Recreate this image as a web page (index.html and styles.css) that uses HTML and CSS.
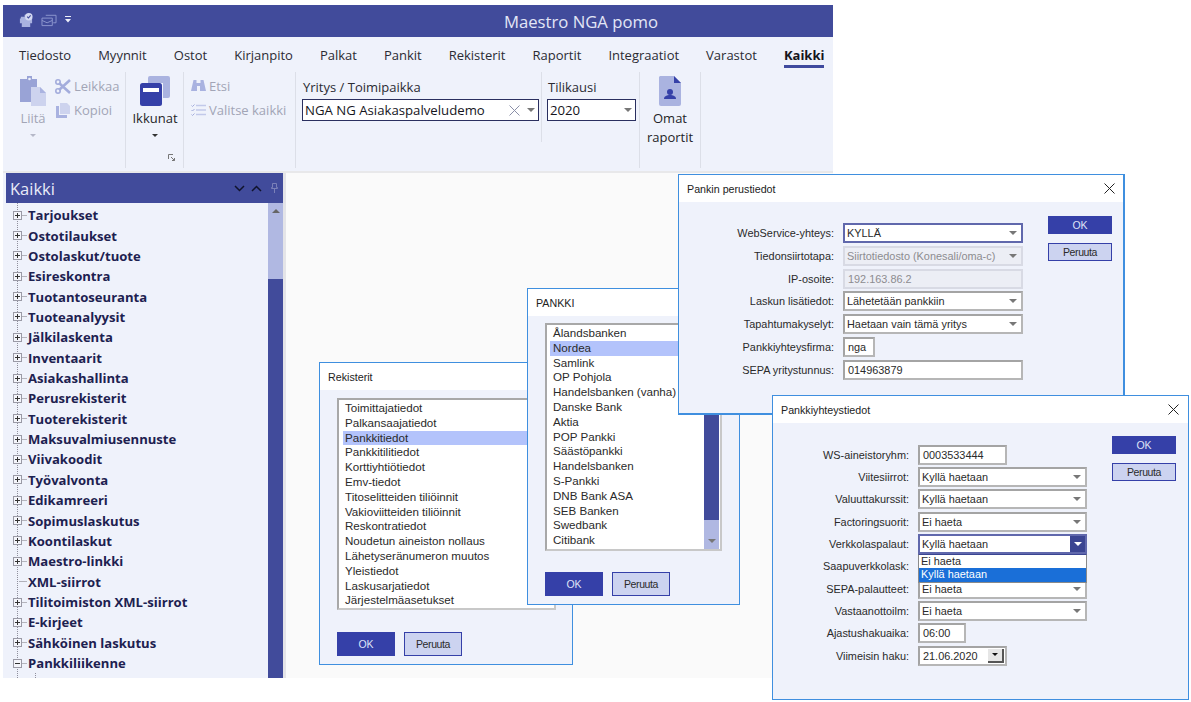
FILE: index.html
```html
<!DOCTYPE html>
<html lang="fi">
<head>
<meta charset="UTF-8" />
<title>Maestro NGA pomo</title>
<link rel="stylesheet" href="styles.css">
</head>
<body>
<div class="app">
  <div class="titlebar">
    <svg class="qa-icon" width="16" height="15" viewBox="0 0 17 16"><path fill="#aab3e0" d="M3 5h4V3h5v4h3v5h-2v4H4v-4H2V7h1z"/><circle cx="11.500" cy="5" r="4" fill="#d5daf2"/><path d="M9.700 5l1.400 1.400 2.300-2.800" fill="none" stroke="#414b9b" stroke-width="1.200"/></svg>
    <svg class="qa-icon" width="16" height="15" viewBox="0 0 16 16"><path fill="none" stroke="#8f99d0" d="M4.500 3.500h11v8h-3M.5 6.500h11v8H.500zM.5 9l5.500 2.500L11.500 9"/></svg>
    <svg class="qa-icon qa-more" width="6" height="7" viewBox="0 0 6 7"><path fill="#eef0fa" d="M0 0h6v1H0zM0 3h6L3 6.500z"/></svg>
    <div class="app-title">Maestro NGA pomo</div>
  </div>

  <div class="ribbon">
    <div class="tabs">
      <span>Tiedosto</span><span>Myynnit</span><span>Ostot</span><span>Kirjanpito</span><span>Palkat</span><span>Pankit</span><span>Rekisterit</span><span>Raportit</span><span>Integraatiot</span><span>Varastot</span><span class="tab-active">Kaikki</span>
    </div>
    <div class="groups">
      <div class="group group-clip">
        <div class="big-btn muted">
          <svg width="26" height="30" viewBox="0 0 26 30"><path fill="#99a3d6" d="M0 3h7V0h5v3h5v8h-6v15H0z"/><circle cx="9.500" cy="3" r="1.300" fill="#eff2fb"/><path fill="#cdd3ee" d="M11 11h9l6 6v13H11z"/><path fill="#aab3e0" d="M20 11l6 6h-6z"/></svg>
          <div class="big-label">Liitä</div>
          <i class="caret caret-muted"></i>
        </div>
        <div class="small-col">
          <div class="small-btn muted">
            <svg width="16" height="15" viewBox="0 0 16 15"><path d="M4 11L15 1M4 4l11 10" stroke="#a3acdc" stroke-width="2.600" fill="none"/><circle cx="3" cy="3" r="2.200" fill="none" stroke="#a3acdc" stroke-width="1.600"/><circle cx="3" cy="12" r="2.200" fill="none" stroke="#a3acdc" stroke-width="1.600"/></svg>
            Leikkaa
          </div>
          <div class="small-btn muted">
            <svg width="16" height="15" viewBox="0 0 16 15"><path fill="#a9b2e0" d="M1 3h3v9h8v3H1z"/><path fill="#cdd3ee" d="M5 0h7l3 3v8H5z"/></svg>
            Kopioi
          </div>
        </div>
      </div>

      <div class="group group-win">
        <div class="big-btn">
          <svg width="30" height="30" viewBox="0 0 30 30"><path fill="#aab3e0" d="M8 2a2 2 0 0 1 2-2h18a2 2 0 0 1 2 2v18a2 2 0 0 1-2 2h-5V7H8z"/><rect x="0" y="7" width="22" height="23" rx="2.500" fill="#3540a8"/><rect x="3" y="12" width="16" height="4" fill="#fff"/></svg>
          <div class="big-label">Ikkunat</div>
          <i class="caret"></i>
        </div>
        <svg class="launcher" width="7" height="7" viewBox="0 0 7 7"><path d="M.5 5V.5H5M3 3l3.500 3.500M6.500 4v2.500H4" fill="none" stroke="#777"/></svg>
      </div>

      <div class="group group-find">
        <div class="small-btn muted">
          <svg width="15" height="12" viewBox="0 0 15 12"><path fill="#a9b2e0" d="M2.500 0h3v3h4V0h3L15 11H9V6H6v5H0z"/></svg>
          Etsi
        </div>
        <div class="small-btn muted">
          <svg width="15" height="12" viewBox="0 0 15 12"><path d="M5 1.500h10M5 6h10M5 10.500h10" stroke="#c2c9ea" stroke-width="1.400"/><path d="M.5 1.500l1 1L3.500.5M.5 6l1 1 2-2M.5 10.500l1 1 2-2" stroke="#a3acdc" fill="none"/></svg>
          Valitse kaikki
        </div>
      </div>

      <div class="group group-company">
        <label class="combo-label">Yritys / Toimipaikka</label>
        <div class="combo">
          <span class="combo-text">NGA NG Asiakaspalveludemo</span>
          <svg width="11" height="11" viewBox="0 0 11 11"><path d="M.5.500l10 10M10.500.500l-10 10" stroke="#8a8fa8" fill="none"/></svg>
          <i class="arrow"></i>
        </div>
      </div>

      <div class="group group-year">
        <label class="combo-label">Tilikausi</label>
        <div class="combo">
          <span class="combo-text">2020</span>
          <i class="arrow"></i>
        </div>
      </div>

      <div class="group group-own">
        <div class="big-btn">
          <svg width="22" height="30" viewBox="0 0 22 30"><path fill="#aab3e0" d="M1 0h14l7 7v21a2 2 0 0 1-2 2H2a2 2 0 0 1-2-2V1z"/><path fill="#3540a8" d="M15 0l7 7h-7z"/><circle cx="11" cy="16" r="3" fill="#3540a8"/><path fill="#3540a8" d="M5 23c0-3 3-4 6-4s6 1 6 4z"/></svg>
          <div class="big-label">Omat<br>raportit</div>
        </div>
      </div>
    </div>
  </div>

  <div class="workspace">
    <div class="sidebar">
      <div class="side-head">
        <span class="side-title">Kaikki</span>
        <svg width="11" height="7" viewBox="0 0 11 7"><path d="M1 1l4.500 4.500L10 1" fill="none" stroke="#10132c" stroke-width="1.500"/></svg>
        <svg width="11" height="7" viewBox="0 0 11 7"><path d="M1 6l4.500-4.500L10 6" fill="none" stroke="#10132c" stroke-width="1.500"/></svg>
        <svg class="pin" width="7" height="10" viewBox="0 0 7 10"><path d="M1.500.500h4v4h1v1h-6v-1h1zM3.500 5.500V10" fill="none" stroke="#7a80b8"/></svg>
      </div>
      <div class="side-body">
        <div class="tree">
          <div class="node"><i class="exp"></i>Tarjoukset</div>
          <div class="node"><i class="exp"></i>Ostotilaukset</div>
          <div class="node"><i class="exp"></i>Ostolaskut/tuote</div>
          <div class="node"><i class="exp"></i>Esireskontra</div>
          <div class="node"><i class="exp"></i>Tuotantoseuranta</div>
          <div class="node"><i class="exp"></i>Tuoteanalyysit</div>
          <div class="node"><i class="exp"></i>Jälkilaskenta</div>
          <div class="node"><i class="exp"></i>Inventaarit</div>
          <div class="node"><i class="exp"></i>Asiakashallinta</div>
          <div class="node"><i class="exp"></i>Perusrekisterit</div>
          <div class="node"><i class="exp"></i>Tuoterekisterit</div>
          <div class="node"><i class="exp"></i>Maksuvalmiusennuste</div>
          <div class="node"><i class="exp"></i>Viivakoodit</div>
          <div class="node"><i class="exp"></i>Työvalvonta</div>
          <div class="node"><i class="exp"></i>Edikamreeri</div>
          <div class="node"><i class="exp"></i>Sopimuslaskutus</div>
          <div class="node"><i class="exp"></i>Koontilaskut</div>
          <div class="node"><i class="exp"></i>Maestro-linkki</div>
          <div class="node"><i class="leaf"></i>XML-siirrot</div>
          <div class="node"><i class="exp"></i>Tilitoimiston XML-siirrot</div>
          <div class="node"><i class="exp"></i>E-kirjeet</div>
          <div class="node"><i class="exp"></i>Sähköinen laskutus</div>
          <div class="node"><i class="exp exp-open"></i>Pankkiliikenne</div>
          <div class="subline"></div>
        </div>
        <div class="side-scroll">
          <div class="scroll-track"><i class="arrow-up"></i></div>
          <div class="scroll-thumb"></div>
        </div>
      </div>
    </div>
    <div class="main"></div>
  </div>
</div>

<div class="dialog dlg-rekisterit">
  <div class="dlg-title">Rekisterit</div>
  <div class="dlg-body">
    <div class="listbox list-reg">
      <div class="item">Toimittajatiedot</div>
      <div class="item">Palkansaajatiedot</div>
      <div class="item selected">Pankkitiedot</div>
      <div class="item">Pankkitilitiedot</div>
      <div class="item">Korttiyhtiötiedot</div>
      <div class="item">Emv-tiedot</div>
      <div class="item">Titoselitteiden tiliöinnit</div>
      <div class="item">Vakioviitteiden tiliöinnit</div>
      <div class="item">Reskontratiedot</div>
      <div class="item">Noudetun aineiston nollaus</div>
      <div class="item">Lähetyseränumeron muutos</div>
      <div class="item">Yleistiedot</div>
      <div class="item">Laskusarjatiedot</div>
      <div class="item">Järjestelmäasetukset</div>
    </div>
    <div class="btn-row">
      <div class="btn btn-ok">OK</div>
      <div class="btn btn-cancel">Peruuta</div>
    </div>
  </div>
</div>

<div class="dialog dlg-pankki">
  <div class="dlg-title">PANKKI</div>
  <div class="dlg-body">
    <div class="listbox list-bank">
      <div class="list-items">
        <div class="item">Ålandsbanken</div>
        <div class="item selected">Nordea</div>
        <div class="item">Samlink</div>
        <div class="item">OP Pohjola</div>
        <div class="item">Handelsbanken (vanha)</div>
        <div class="item">Danske Bank</div>
        <div class="item">Aktia</div>
        <div class="item">POP Pankki</div>
        <div class="item">Säästöpankki</div>
        <div class="item">Handelsbanken</div>
        <div class="item">S-Pankki</div>
        <div class="item">DNB Bank ASA</div>
        <div class="item">SEB Banken</div>
        <div class="item">Swedbank</div>
        <div class="item">Citibank</div>
      </div>
      <div class="list-scroll">
        <div class="scroll-thumb"></div>
        <div class="scroll-track"><i class="arrow"></i></div>
      </div>
    </div>
    <div class="btn-row">
      <div class="btn btn-ok">OK</div>
      <div class="btn btn-cancel">Peruuta</div>
    </div>
  </div>
</div>

<div class="dialog dlg-perus">
  <div class="dlg-title">Pankin perustiedot
    <svg class="dlg-close" width="11" height="11" viewBox="0 0 11 11"><path d="M.5.500l10 10M10.500.500l-10 10" stroke="#222" fill="none"/></svg>
  </div>
  <div class="dlg-body form-body">
    <div class="form">
      <label>WebService-yhteys:</label>
      <div class="field select focus">KYLLÄ<i class="arrow"></i></div>
      <label>Tiedonsiirtotapa:</label>
      <div class="field select disabled">Siirtotiedosto (Konesali/oma-c)<i class="arrow"></i></div>
      <label>IP-osoite:</label>
      <div class="field disabled text">192.163.86.2</div>
      <label>Laskun lisätiedot:</label>
      <div class="field select">Lähetetään pankkiin<i class="arrow"></i></div>
      <label>Tapahtumakyselyt:</label>
      <div class="field select">Haetaan vain tämä yritys<i class="arrow"></i></div>
      <label>Pankkiyhteysfirma:</label>
      <div class="field text w-firm">nga</div>
      <label>SEPA yritystunnus:</label>
      <div class="field text">014963879</div>
    </div>
    <div class="btn-col">
      <div class="btn btn-ok">OK</div>
      <div class="btn btn-cancel">Peruuta</div>
    </div>
  </div>
</div>

<div class="dialog dlg-yhteys">
  <div class="dlg-title">Pankkiyhteystiedot
    <svg class="dlg-close" width="11" height="11" viewBox="0 0 11 11"><path d="M.5.500l10 10M10.500.500l-10 10" stroke="#222" fill="none"/></svg>
  </div>
  <div class="dlg-body form-body">
    <div class="form">
      <label>WS-aineistoryhm:</label>
      <div class="field text w-ws">0003533444</div>
      <label>Viitesiirrot:</label>
      <div class="field select">Kyllä haetaan<i class="arrow"></i></div>
      <label>Valuuttakurssit:</label>
      <div class="field select">Kyllä haetaan<i class="arrow"></i></div>
      <label>Factoringsuorit:</label>
      <div class="field select">Ei haeta<i class="arrow"></i></div>
      <label>Verkkolaspalaut:</label>
      <div class="field select focus open">Kyllä haetaan<span class="arrow-box"><i class="arrow"></i></span>
        <div class="dropdown">
          <div class="drop-item">Ei haeta</div>
          <div class="drop-item active">Kyllä haetaan</div>
        </div>
      </div>
      <label>Saapuverkkolask:</label>
      <div class="field select"></div>
      <label>SEPA-palautteet:</label>
      <div class="field select">Ei haeta<i class="arrow"></i></div>
      <label>Vastaanottoilm:</label>
      <div class="field select">Ei haeta<i class="arrow"></i></div>
      <label>Ajastushakuaika:</label>
      <div class="field text w-time">06:00</div>
      <label>Viimeisin haku:</label>
      <div class="field text w-ws date">21.06.2020<span class="date-btn"><i class="arrow arrow-dark"></i></span></div>
    </div>
    <div class="btn-col">
      <div class="btn btn-ok">OK</div>
      <div class="btn btn-cancel">Peruuta</div>
    </div>
  </div>
</div>
</body>
</html>
```

FILE: styles.css
```css
* {
  margin: 0;
  padding: 0;
  box-sizing: border-box;
}

body {
  width: 1191px;
  height: 702px;
  overflow: hidden;
  background: #fff;
  position: relative;
  font-family: "Liberation Sans", Arial, sans-serif;
  font-size: 11px;
  color: #222;
}

i {
  display: block;
  font-style: normal;
}

/* main window */
.app {
  width: 830px;
  height: 673px;
  margin: 5px 0 0 3px;
  display: flex;
  flex-direction: column;
  overflow: hidden;
  font-family: "Open Sans", "Noto Sans", sans-serif;
  background: #fafafa;
}

.titlebar {
  height: 32px;
  flex: none;
  display: flex;
  align-items: center;
  gap: 7px;
  padding-left: 15px;
  padding-bottom: 3px;
  background: #414b9b;
}

.qa-more {
  margin-left: 1px;
}

.app-title {
  margin-left: auto;
  padding-right: 175px;
  padding-top: 4px;
  font-size: 16.700px;
  color: #e3e6f6;
}

.ribbon {
  height: 136px;
  flex: none;
  background: #eff2fb;
  border-bottom: 2px solid #e8e8ea;
}

.tabs {
  height: 35px;
  display: flex;
  align-items: center;
  gap: 27px;
  padding-left: 16px;
  font-size: 13px;
  color: #2b2b33;
}

.tab-active {
  font-weight: 700;
  position: relative;
  color: #15151c;
}

.tab-active::after {
  content: "";
  position: absolute;
  left: 0;
  right: 0;
  bottom: -4px;
  height: 3px;
  background: #3f4a9e;
}

.groups {
  display: flex;
  height: 96px;
}

.group {
  flex: none;
  border-right: 1px solid #dcdfe8;
  position: relative;
}

.group-clip {
  width: 123px;
  display: flex;
  padding-left: 6px;
}

.group-win {
  width: 58px;
}

.group-find {
  width: 112px;
  padding: 2px 0 0 7px;
}

.group-company {
  width: 246px;
  height: 70px;
  padding: 6px 0 0 6px;
}

.group-year {
  width: 98px;
  padding: 6px 0 0 5px;
}

.group-own {
  width: 61px;
}

.big-btn {
  width: 48px;
  display: flex;
  flex-direction: column;
  align-items: center;
  padding-top: 4px;
  font-size: 13px;
  color: #1f1f28;
}

.group-win .big-btn {
  width: 58px;
}

.group-own .big-btn {
  width: 60px;
}

.big-label {
  margin-top: 3px;
  line-height: 19px;
  text-align: center;
}

.muted {
  color: #a2a5b6;
}

.caret {
  width: 0;
  height: 0;
  margin-top: 6px;
  border-left: 3px solid transparent;
  border-right: 3px solid transparent;
  border-top: 3px solid #333;
}

.caret-muted {
  border-top-color: #b5b8c8;
}

.launcher {
  position: absolute;
  left: 42px;
  bottom: 7px;
}

.small-btn {
  height: 24px;
  display: flex;
  align-items: center;
  gap: 3px;
  font-size: 13px;
  white-space: nowrap;
}

.small-col {
  padding-top: 2px;
  margin-left: -2px;
}

.combo-label {
  display: block;
  height: 21px;
  line-height: 18px;
  padding-left: 1px;
  font-size: 13px;
  color: #2b2b33;
}

.combo {
  height: 22px;
  display: flex;
  align-items: center;
  padding-left: 2px;
  background: #fff;
  border: 1px solid #2a2f5f;
  font-size: 13.200px;
  color: #15151c;
}

.group-company .combo {
  width: 237px;
}

.group-year .combo {
  width: 89px;
}

.combo-text {
  flex: 1;
  white-space: nowrap;
}

.combo svg {
  margin-right: 7px;
}

.combo .arrow {
  margin-right: 3px;
}

.arrow {
  width: 0;
  height: 0;
  flex: none;
  border-left: 4px solid transparent;
  border-right: 4px solid transparent;
  border-top: 4px solid #777;
}

/* sidebar */
.workspace {
  flex: 1;
  display: flex;
  min-height: 0;
}

.sidebar {
  width: 283px;
  flex: none;
  display: flex;
  flex-direction: column;
  border-right: 3px solid #e4e4e8;
  background: #eff2fb;
}

.side-head {
  height: 30px;
  flex: none;
  margin-left: 3px;
  display: flex;
  align-items: center;
  gap: 6px;
  padding: 0 5px 0 4px;
  background: #414b9b;
}

.side-title {
  flex: 1;
  font-size: 16.500px;
  color: #e8eaf8;
}

.pin {
  margin-left: 3px;
}

.side-body {
  flex: 1;
  display: flex;
  min-height: 0;
}

.tree {
  flex: 1;
  padding-top: 2px;
  background: repeating-linear-gradient(to bottom, #8f8f9c 0, #8f8f9c 1px, transparent 1px, transparent 2px) 14px 0 / 1px 100% no-repeat;
}

.node {
  height: 20.360px;
  display: flex;
  align-items: center;
  padding-left: 10px;
  background: linear-gradient(#b4b4bc, #b4b4bc) 19px center / 5px 1px no-repeat;
  font-size: 13.100px;
  font-weight: 700;
  color: #1d2150;
  white-space: nowrap;
}

.exp {
  width: 9px;
  height: 9px;
  margin-right: 6px;
  flex: none;
  border: 1px solid #9a9aa6;
  background:
    linear-gradient(#333, #333) center / 5px 1px no-repeat,
    linear-gradient(#333, #333) center / 1px 5px no-repeat,
    #f4f5fb;
}

.exp-open {
  background:
    linear-gradient(#333, #333) center / 5px 1px no-repeat,
    #f4f5fb;
}

.leaf {
  width: 6px;
  height: 1px;
  margin: 0 3px 0 6px;
  flex: none;
  background: #b0b0b8;
}

.subline {
  width: 1px;
  height: 6px;
  margin-left: 32px;
  background: repeating-linear-gradient(to bottom, #8f8f9c 0, #8f8f9c 1px, transparent 1px, transparent 2px);
}

.side-scroll {
  width: 15px;
  flex: none;
  display: flex;
  flex-direction: column;
}

.side-scroll .scroll-track {
  height: 76px;
  flex: none;
  padding-top: 6px;
}

.side-scroll .scroll-thumb {
  flex: 1;
}

.scroll-track {
  background: #b0b8e2;
}

.scroll-thumb {
  background: #414b9b;
}

.arrow-up {
  width: 0;
  height: 0;
  margin: 0 auto;
  border-left: 4px solid transparent;
  border-right: 4px solid transparent;
  border-bottom: 4px solid #666;
}

.main {
  flex: 1;
}

/* dialogs */
.dialog {
  position: absolute;
  display: flex;
  flex-direction: column;
  background: #eff2fb;
  border: 1px solid #3f8fdf;
  font-size: 10.900px;
  color: #2a2a2a;
}

.dlg-rekisterit {
  left: 319px;
  top: 362px;
  width: 254px;
  height: 303px;
}

.dlg-pankki {
  left: 527px;
  top: 288px;
  width: 213px;
  height: 317px;
}

.dlg-perus {
  left: 678px;
  top: 174px;
  width: 447px;
  height: 241px;
  border-width: 1px 2px 2px 1px;
}

.dlg-yhteys {
  left: 772px;
  top: 395px;
  width: 417px;
  height: 305px;
}

.dlg-title {
  height: 27px;
  flex: none;
  display: flex;
  align-items: center;
  justify-content: space-between;
  padding: 0 9px 0 8px;
  background: #fff;
  font-size: 10.700px;
  color: #222;
}

.dlg-perus .dlg-close {
  margin-right: -1px;
}

.dlg-body {
  flex: 1;
  padding: 8px 0 0 17px;
}

.listbox {
  background: #fff;
  border: 2px solid #a8a8a8;
  border-right-color: #c8c8c8;
  border-bottom-color: #c8c8c8;
  font-size: 11.600px;
}

.list-reg {
  width: 219px;
  height: 212px;
  padding: 1px 0 0 4px;
}

.list-reg .item {
  padding-left: 2px;
}

.list-bank {
  width: 177px;
  height: 228px;
  padding: 1px 0 0 3px;
  display: flex;
  margin-top: -1px;
}

.list-items {
  flex: 1;
}

.item {
  height: 14.800px;
  line-height: 14.800px;
  padding-left: 3px;
  white-space: nowrap;
}

.selected {
  background: #b3c3fb;
}

.list-scroll {
  width: 15px;
  flex: none;
  display: flex;
  flex-direction: column;
  margin: -1px 1px 0 0;
}

.list-scroll .scroll-thumb {
  flex: 1;
}

.list-scroll .scroll-track {
  height: 29px;
  padding-top: 19px;
  display: flex;
  justify-content: center;
  align-items: flex-start;
}

.btn-row {
  display: flex;
  gap: 9px;
  margin-top: 22px;
}

.dlg-pankki .btn-row {
  margin-top: 21px;
}

.btn {
  width: 58px;
  height: 24px;
  display: flex;
  align-items: center;
  justify-content: center;
  font-size: 10.500px;
}

.btn-ok {
  background: #3540a8;
  color: #dfe3f6;
}

.btn-cancel {
  background: #ccd3f0;
  border: 1px solid #3540a8;
  color: #2a2a2a;
  letter-spacing: -0.4px;
}

.form-body {
  display: flex;
  padding-left: 0;
}

.form {
  display: grid;
  align-items: center;
  justify-items: end;
  column-gap: 9px;
}

.dlg-perus .form {
  grid-template-columns: 155px 180px;
  grid-auto-rows: 20px;
  row-gap: 2.830px;
  margin-top: 13px;
}

.dlg-yhteys .form {
  grid-template-columns: 136px 169px;
  grid-auto-rows: 20px;
  row-gap: 2.350px;
  margin-top: 13.500px;
}

.form label {
  white-space: nowrap;
}

.field {
  width: 100%;
  height: 100%;
  position: relative;
  display: flex;
  align-items: center;
  justify-content: space-between;
  padding: 0 4px 0 2px;
  justify-self: start;
  background: #fff;
  border: 2px solid #b6b6b6;
  border-top-color: #a4a4a4;
  border-left-color: #a4a4a4;
  white-space: nowrap;
}

.field.text {
  padding-left: 3px;
}

.focus {
  border-color: #6068ac;
}

.disabled {
  background: #eceef5;
  border-color: #d8dae4;
  color: #8c8c90;
}

.w-firm {
  width: 32px;
}

.w-ws {
  width: 89px;
}

.w-time {
  width: 48px;
}

.arrow-box {
  width: 15px;
  height: 100%;
  margin-right: -4px;
  display: flex;
  align-items: center;
  justify-content: center;
  background: #3b4592;
}

.arrow-box .arrow {
  border-top-color: #fff;
}

.dropdown {
  position: absolute;
  left: -2px;
  right: -2px;
  top: 18px;
  z-index: 2;
  background: #fff;
  border: 1px solid #8a8a8a;
  border-top-color: #3b4592;
}

.drop-item {
  height: 13.500px;
  line-height: 13.500px;
  padding-left: 2px;
}

.active {
  background: #1a6fd8;
  color: #fff;
}

.date {
  padding-right: 1px;
}

.date-btn {
  width: 16px;
  height: 14px;
  display: flex;
  align-items: center;
  justify-content: center;
  background: #e6e6e6;
  border-right: 2px solid #555;
  border-bottom: 2px solid #555;
}

.arrow-dark {
  border-width: 3px 3px 0;
  border-top-color: #111;
}

.btn-col {
  display: flex;
  flex-direction: column;
  gap: 9px;
}

.dlg-perus .btn-col {
  margin: 6px 0 0 25px;
}

.dlg-yhteys .btn-col {
  margin: 5px 0 0 25px;
}

.btn-col .btn {
  width: 64px;
  height: 18px;
}
```
